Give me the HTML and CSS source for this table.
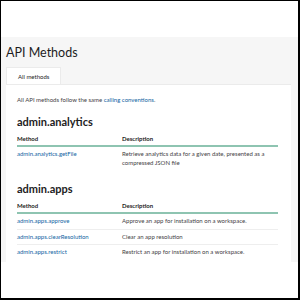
FILE: index.html
```html
<!DOCTYPE html>
<html lang="en">
<head>
  <meta charset="UTF-8" />
  <title>API Methods</title>
  <link rel="stylesheet" href="styles.css">
</head>
<body>
  <div class="frame">
    <div class="topbar"></div>
    <div class="page">
      <h1 class="title">API Methods</h1>
      <div class="tabs">
        <div class="tab active">All methods</div>
      </div>
      <div class="panel">
        <p class="intro">All API methods follow the same <a href="#">calling conventions</a>.</p>

        <h2 class="family first">admin.analytics</h2>
        <table class="methods">
          <thead>
            <tr><th class="col-method">Method</th><th>Description</th></tr>
          </thead>
          <tbody>
            <tr>
              <td><a href="#">admin.analytics.getFile</a></td>
              <td>Retrieve analytics data for a given date, presented as a compressed JSON file</td>
            </tr>
          </tbody>
        </table>

        <h2 class="family">admin.apps</h2>
        <table class="methods">
          <thead>
            <tr><th class="col-method">Method</th><th>Description</th></tr>
          </thead>
          <tbody>
            <tr>
              <td><a href="#">admin.apps.approve</a></td>
              <td>Approve an app for installation on a workspace.</td>
            </tr>
            <tr>
              <td><a href="#">admin.apps.clearResolution</a></td>
              <td>Clear an app resolution</td>
            </tr>
            <tr>
              <td><a href="#">admin.apps.restrict</a></td>
              <td>Restrict an app for installation on a workspace.</td>
            </tr>
          </tbody>
        </table>
      </div>
    </div>
  </div>
</body>
</html>
```

FILE: styles.css
```css
body { margin: 0; font-family: Lato, 'Open Sans', sans-serif; color: #1d1c1d; background: #fff; }
.frame { width: 300px; height: 300px; box-sizing: border-box; border: solid #000; border-width: 1px 2px 2px 1px; overflow: hidden; }
.topbar { height: 36px; background: #fff; }
.page { height: 225px; background: #f6f6f6; padding: 0 7px 0 5px; overflow: hidden; }
.title { margin: 0; padding-top: 9px; font-size: 12.5px; font-weight: 400; line-height: 14px; color: #1d1c1d; }
.tabs { display: flex; margin-top: 7px; }
.tab { width: 55px; height: 17px; box-sizing: border-box; padding-left: 11px; font-size: 6px; line-height: 17px; color: #1d1c1d; }
.tab.active { background: #fff; border: 1px solid #ebebeb; border-bottom: none; }
.panel { background: #fff; border-top: 1px solid #ebebeb; padding: 8px 12px 0 11px; height: 200px; }
.intro { margin: 0; font-size: 6px; line-height: 14px; color: #454245; }
a { color: #1264a3; text-decoration: none; }
.family { margin: 12px 0 0; font-size: 11px; font-weight: 700; line-height: 14px; }
.family.first { margin-top: 8px; }
.methods { width: 261px; border-collapse: collapse; margin-top: 3px; font-size: 6px; }
.methods th { text-align: left; font-weight: 700; padding: 3px 0 3px; border-bottom: 2px solid #8ec4b1; line-height: 7px; }
.methods .col-method { width: 105px; }
.methods td { vertical-align: top; padding: 3px 6px 3px 0; line-height: 8.5px; color: #454245; border-top: 1px solid #eeeeee; }
.methods tbody tr:first-child td { border-top: none; }
```
